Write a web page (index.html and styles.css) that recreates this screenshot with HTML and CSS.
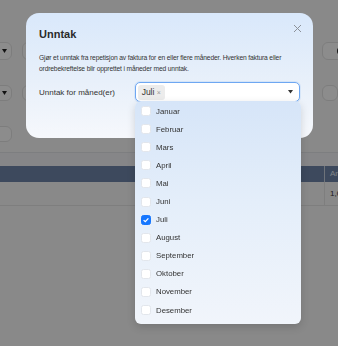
FILE: index.html
```html
<!DOCTYPE html>
<html>

<head>
	<meta charset="UTF-8">
	<title>Unntak</title>
	<link rel="stylesheet" href="styles.css">
</head>

<body>
	<div class="page">
		<div class="frow first">
			<div class="field small"><svg class="caret" width="5" height="4" viewBox="0 0 5 4"><path d="M0 0H5L2.5 4Z" fill="#222"/></svg></div>
			<div class="field wide"></div>
			<div class="field side"><span class="clear">&#10006;</span><span class="bin"></span></div>
		</div>
		<div class="frow">
			<div class="field small"><svg class="caret" width="5" height="4" viewBox="0 0 5 4"><path d="M0 0H5L2.5 4Z" fill="#222"/></svg></div>
			<div class="field wide"></div>
			<div class="field side"></div>
		</div>
		<div class="frow">
			<div class="field small"></div>
		</div>
		<div class="band"></div>
		<div class="thead">
			<div class="th main"></div>
			<div class="th">Antall</div>
		</div>
		<div class="trow">
			<div class="td main"></div>
			<div class="td">1,00</div>
		</div>
	</div>

	<div class="overlay"></div>

	<div class="modal">
		<div class="modal-head">
			<h1>Unntak</h1>
			<span class="close">
				<svg width="9" height="9" viewBox="0 0 9 9"><path d="M1 1L8 8M8 1L1 8" stroke="#8c9199" stroke-width="1" fill="none"/></svg>
			</span>
		</div>
		<p class="desc">Gjør et unntak fra repetisjon av faktura for en eller flere måneder. Hverken faktura eller ordrebekreftelse blir opprettet i måneder med unntak.</p>
		<div class="form-row">
			<label>Unntak for måned(er)</label>
			<div class="select">
				<span class="chip">Juli <span class="x">&times;</span></span>
				<svg class="arrow" width="5" height="4" viewBox="0 0 5 4"><path d="M0 0H5L2.5 3.5Z" fill="#333"/></svg>
			</div>
		</div>
	</div>

	<ul class="dropdown">
		<li class="active"><span class="box"></span>Januar</li>
		<li><span class="box"></span>Februar</li>
		<li><span class="box"></span>Mars</li>
		<li><span class="box"></span>April</li>
		<li><span class="box"></span>Mai</li>
		<li><span class="box"></span>Juni</li>
		<li><span class="box checked"><svg width="8" height="8" viewBox="0 0 8 8"><path d="M1.6 4.1L3.3 5.7L6.4 2.4" stroke="#fff" stroke-width="1.3" fill="none"/></svg></span>Juli</li>
		<li><span class="box"></span>August</li>
		<li><span class="box"></span>September</li>
		<li><span class="box"></span>Oktober</li>
		<li><span class="box"></span>November</li>
		<li><span class="box"></span>Desember</li>
	</ul>
</body>

</html>
```

FILE: styles.css
```css
html,
body {
	margin: 0;
	padding: 0;
	height: 100%;
	overflow: hidden;
}

body {
	background: #fafafa;
	font-family: "Liberation Sans", Arial, sans-serif;
	color: #333;
}

.page {
	padding-top: 42px;
}

.frow {
	display: flex;
	gap: 10px;
	height: 18px;
	margin-bottom: 25px;
	margin-left: -30px;
}

.frow + .frow {
	height: 16px;
}

.field {
	box-sizing: border-box;
	border: 1px solid #e4e4e4;
	border-radius: 6px;
	background: #fff;
	display: flex;
	align-items: center;
	flex-shrink: 0;
}

.field.small {
	width: 42px;
	justify-content: flex-end;
	padding-right: 4px;
}

.field.wide {
	width: 290px;
}

.field.side {
	flex: 1;
	padding-left: 14px;
	gap: 3px;
}

.clear {
	display: inline-block;
	width: 8px;
	height: 8px;
	border-radius: 50%;
	background: #222;
	color: #fff;
	font-size: 5px;
	line-height: 8px;
	text-align: center;
}

.bin {
	width: 5px;
	height: 7px;
	border: 1px solid #444;
	border-radius: 1px;
}

.band {
	margin-top: -15px;
	height: 13px;
	border-top: 1px solid #e4e6ea;
	background: #f4f5f7;
}

.thead,
.trow {
	display: flex;
}

.thead {
	background: #6f86a9;
	height: 16px;
	color: #e6ecf4;
	font-size: 8px;
	line-height: 16px;
}

.trow {
	height: 23px;
	line-height: 23px;
	font-size: 8px;
	border-bottom: 1px solid #e6e6e6;
}

.th.main,
.td.main {
	width: 319px;
	flex-shrink: 0;
	border-right: 1px solid #c9d2de;
}

.td.main {
	border-right-color: #e6e6e6;
}

.th,
.td {
	padding-left: 5px;
	white-space: nowrap;
}

.overlay {
	position: fixed;
	inset: 0;
	background: rgba(0, 0, 0, 0.45);
}

.modal {
	position: absolute;
	left: 26px;
	top: 13px;
	width: 287px;
	height: 125px;
	box-sizing: border-box;
	padding: 13px 13px;
	border-radius: 13px;
	background: linear-gradient(180deg, #d9e8fb 0%, #e8f0fa 55%, #f6f8fc 100%);
}

.modal-head {
	display: flex;
	justify-content: space-between;
	align-items: flex-start;
}

h1 {
	margin: 0;
	font-size: 11px;
	line-height: 14px;
	font-weight: bold;
	color: #2b2b2b;
	padding-top: 1px;
}

.close {
	margin-top: -2px;
	margin-right: -2px;
	line-height: 0;
}

.desc {
	margin: 12px 0 0;
	font-size: 6.7px;
	letter-spacing: -0.15px;
	line-height: 10.5px;
	color: #333;
}

.form-row {
	display: flex;
	align-items: center;
	margin-top: 8px;
}

label {
	width: 96px;
	font-size: 8px;
	color: #333;
}

.select {
	box-sizing: border-box;
	width: 166px;
	height: 20px;
	border: 1px solid #6ea7f2;
	border-radius: 5px;
	background: #fff;
	display: flex;
	align-items: center;
	justify-content: space-between;
	padding: 0 6px 0 2px;
	box-shadow: 0 0 0 1px rgba(110, 167, 242, 0.15);
}

.chip {
	background: #ececec;
	border-radius: 3px;
	height: 15px;
	line-height: 15px;
	padding: 0 4px;
	font-size: 8.5px;
	color: #333;
}

.chip .x {
	font-size: 7px;
	color: #999;
}

.dropdown {
	position: absolute;
	left: 135px;
	top: 101px;
	width: 166px;
	height: 223px;
	box-sizing: border-box;
	margin: 0;
	padding: 1px 0 0;
	list-style: none;
	border-radius: 6px;
	background: linear-gradient(180deg, #d6e5f8 0%, #e4eefa 45%, #f1f5fb 100%);
	box-shadow: 0 3px 8px rgba(0, 0, 0, 0.15);
}

.dropdown li {
	display: flex;
	align-items: center;
	height: 18.1px;
	padding-left: 6px;
	font-size: 7.8px;
	color: #333;
}

.box {
	box-sizing: border-box;
	width: 10px;
	height: 10px;
	margin-right: 5px;
	border: 1px solid #e2e6ec;
	border-radius: 2.5px;
	background: #fff;
	display: flex;
	align-items: center;
	justify-content: center;
}

.box.checked {
	background: #1677ff;
	border-color: #1677ff;
}
```
